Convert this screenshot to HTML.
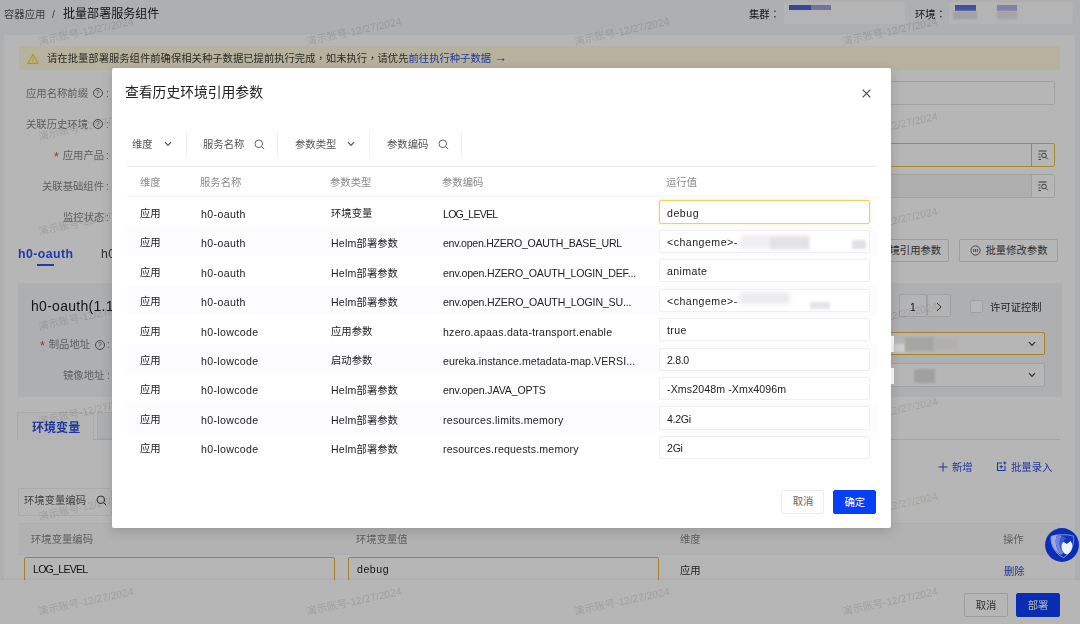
<!DOCTYPE html>
<html lang="zh-CN">
<head>
<meta charset="utf-8">
<title>批量部署服务组件</title>
<style>
*{box-sizing:border-box;margin:0;padding:0}
html,body{width:1080px;height:624px;overflow:hidden}
body{position:relative;background:#f4f5f7;font-family:"Liberation Sans","Noto Sans CJK SC",sans-serif;font-size:10.33px;color:#333}
.b{position:absolute}
#page{position:absolute;left:0;top:0;width:1080px;height:624px;overflow:hidden}
#mask{position:absolute;left:0;top:0;width:1080px;height:624px;background:rgba(0,0,0,.286)}
#modal{position:absolute;left:111.8px;top:67.7px;width:778.8px;height:460.1px;background:#fff;border-radius:2px;box-shadow:0 3px 12px rgba(0,0,0,.16);overflow:hidden}
.t{position:absolute;white-space:nowrap;line-height:16px;height:16px;will-change:transform}
.wm{position:absolute;white-space:nowrap;font-size:10.4px;line-height:12px;height:12px;width:110px;margin-left:-55px;margin-top:-6px;text-align:center;color:rgba(0,0,0,.13);transform:rotate(-12.3deg)}
.inp{position:absolute;border:1px solid #dfe2e6;border-radius:2px;background:#fff}
.btn{position:absolute;border:1px solid #d9dce1;border-radius:2px;background:#fff;text-align:center;line-height:21px;white-space:nowrap;color:#444}
.pri{background:#0640f4;border-color:#0640f4;color:#fff}
.lb{color:#868686}
.cm{font-family:"Liberation Sans","Noto Sans CJK TC",sans-serif}
.q{position:absolute;width:10px;height:10px;border:1px solid #666;border-radius:50%;font-size:7.5px;line-height:8px;text-align:center;color:#555}
.star{color:#e8424d;font-size:12.5px;line-height:10px;position:relative;top:1.5px;margin-right:1px}
.blur{position:absolute;filter:blur(2px)}
.hl{position:absolute;height:1px;background:#e8eaed}
.vl{position:absolute;width:1px;background:#f0f1f4}
</style>
</head>
<body>
<div id="page">
<div class="t" style="left:4px;top:6.8px;color:#555">容器应用</div>
<div class="t" style="left:52px;top:6.8px;color:#555">/</div>
<div class="t" style="left:63px;top:5.8px;font-size:12.05px;color:#222">批量部署服务组件</div>
<div class="t" style="left:749px;top:6.8px;color:#222">集群<span class="cm" lang="zh-TW">：</span></div>
<div class="t" style="left:915px;top:6.8px;color:#222">环境<span class="cm" lang="zh-TW">：</span></div>
<div class="b" style="left:784px;top:2px;width:121px;height:22px;background:#fcfcfd;border-radius:2px"></div>
<div class="b" style="left:949px;top:2px;width:124px;height:22px;background:#fcfcfd;border-radius:2px"></div>
<div class="blur" style="left:789px;top:5px;width:22px;height:5px;background:#4d63d8;filter:blur(.6px)"></div>
<div class="blur" style="left:811px;top:5px;width:20px;height:5px;background:#9aa3e6;filter:blur(.6px)"></div>
<div class="blur" style="left:955px;top:5px;width:21px;height:6px;background:#5a6fe0;filter:blur(.6px)"></div>
<div class="blur" style="left:997px;top:5px;width:20px;height:6px;background:#b3b6ee;filter:blur(.6px)"></div>
<div class="blur" style="left:953px;top:11px;width:24px;height:8px;background:#e3e3e6;filter:blur(1px)"></div>
<div class="blur" style="left:997px;top:11px;width:20px;height:8px;background:#e6e6ea;filter:blur(1px)"></div>
<div class="b" style="left:4px;top:35px;width:1071px;height:600px;background:#fff"></div>
<div class="t lb" style="right:992px;top:85.8px;">应用名称前缀</div>
<div class="q" style="left:92.5px;top:88.2px">?</div>
<div class="t lb" style="left:106px;top:85.8px;">:</div>
<div class="t lb" style="right:992px;top:116.8px;">关联历史环境</div>
<div class="q" style="left:92.5px;top:119.2px">?</div>
<div class="t lb" style="left:106px;top:116.8px;">:</div>
<div class="t lb" style="right:976px;top:147.8px;"><span class="star">*</span> 应用产品</div>
<div class="t lb" style="left:106px;top:147.8px;">:</div>
<div class="t lb" style="right:976px;top:178.8px;">关联基础组件</div>
<div class="t lb" style="left:106px;top:178.8px;">:</div>
<div class="t lb" style="right:976px;top:209.8px;">监控状态</div>
<div class="t lb" style="left:106px;top:209.8px;">:</div>
<div class="inp" style="left:113px;top:81px;width:942px;height:24px"></div>
<div class="inp" style="left:113px;top:143px;width:942px;height:24px;border-color:#f0c23a"></div>
<div class="b" style="left:1031px;top:143px;width:1px;height:24px;background:#f0c23a"></div>
<div class="inp" style="left:113px;top:174px;width:942px;height:24px;background:#f6f6f7"></div>
<div class="b" style="left:1032px;top:175px;width:22px;height:22px;background:#fff"></div>
<div class="b" style="left:1031px;top:174px;width:1px;height:24px;background:#dfe2e6"></div>
<svg class="b" style="left:1037px;top:149px" width="12" height="12" viewBox="0 0 12 12" fill="none" stroke="#555" stroke-width="1"><path d="M1.5 2H9.5M1.5 5H3.5M1.5 8H3.5M1.5 10.5H4"/><circle cx="7" cy="6.5" r="2.3"/><path d="M8.8 8.3L10.8 10.3"/></svg>
<svg class="b" style="left:1037px;top:180px" width="12" height="12" viewBox="0 0 12 12" fill="none" stroke="#555" stroke-width="1"><path d="M1.5 2H9.5M1.5 5H3.5M1.5 8H3.5M1.5 10.5H4"/><circle cx="7" cy="6.5" r="2.3"/><path d="M8.8 8.3L10.8 10.3"/></svg>
<div class="btn" style="left:830px;top:239px;width:119px;height:23px">查看历史环境引用参数</div>
<div class="btn" style="left:959px;top:239px;width:99px;height:23px;padding-left:16px">批量修改参数</div>
<svg class="b" style="left:970px;top:245px" width="11" height="11" viewBox="0 0 11 11" fill="none" stroke="#555" stroke-width="0.9"><circle cx="5.5" cy="5.5" r="4.6"/><path d="M3.7 4V7M5.5 4V7M7.3 4V7"/></svg>
<div class="t" style="left:17.5px;top:245.5px;color:#2e54e8;font-weight:bold"><span style="font-size:12.3px;letter-spacing:0.446px;position:relative;top:-0.5px">h0-oauth</span></div>
<div class="b" style="left:37px;top:264px;width:17px;height:2px;background:#2e54e8"></div>
<div class="t" style="left:101px;top:245.5px;color:#444"><span style="font-size:12.3px;letter-spacing:0.409px;position:relative;top:-0.5px">h0-lowcode</span></div>
<div class="b" style="left:18px;top:282.5px;width:1044px;height:114px;background:#f4f5f7"></div>
<div class="t" style="left:31px;top:298.1px;color:#222"><span style="font-size:14px;letter-spacing:0.284px;position:relative;top:-0.5px">h0-oauth(1.1.0)</span></div>
<div class="t lb" style="right:990px;top:337.40000000000003px;"><span class="star">*</span> 制品地址</div>
<div class="q" style="left:94.6px;top:339.8px">?</div>
<div class="t lb" style="left:107px;top:337.40000000000003px;">:</div>
<div class="t lb" style="right:975.4px;top:368.3px;">镜像地址</div>
<div class="t lb" style="left:106.5px;top:368.3px;">:</div>
<div class="inp" style="left:113px;top:332.2px;width:932px;height:23px;border-color:#f2b33c"></div>
<div class="inp" style="left:113px;top:363px;width:932px;height:23.6px"></div>
<svg class="b" style="left:1028px;top:341px" width="8" height="6" viewBox="0 0 8 6" fill="none" stroke="#444" stroke-width="1.2"><path d="M1 1.2L4 4.4L7 1.2"/></svg>
<svg class="b" style="left:1028px;top:372px" width="8" height="6" viewBox="0 0 8 6" fill="none" stroke="#444" stroke-width="1.2"><path d="M1 1.2L4 4.4L7 1.2"/></svg>
<div class="inp" style="left:899px;top:294px;width:28px;height:23px;background:#fdfdfd"></div>
<div class="inp" style="left:927px;top:294px;width:24px;height:23px;background:#fdfdfd"></div>
<div class="t" style="left:910px;top:299.8px;color:#222">1</div>
<svg class="b" style="left:936px;top:302px" width="6" height="10" viewBox="0 0 6 10" fill="none" stroke="#444" stroke-width="1"><path d="M1 1L5 5L1 9"/></svg>
<div class="inp" style="left:970px;top:300px;width:13px;height:13px"></div>
<div class="t" style="left:990px;top:299.8px;color:#333">许可证控制</div>
<div class="b" style="left:17px;top:412px;width:77px;height:28px;border:1px solid #eceef0;border-bottom:none;background:#fdfdfd"></div>
<div class="b" style="left:97px;top:412px;width:77px;height:27px;border:1px solid #e9ebee;background:#f4f5f7"></div>
<div class="hl" style="left:94px;top:439px;width:966px;background:#e3e5e8"></div>
<div class="t" style="left:32px;top:419.8px;font-size:12.05px;color:#2a4fe0;font-weight:bold">环境变量</div>
<svg class="b" style="left:938px;top:462px" width="10" height="10" viewBox="0 0 10 10" stroke="#2a4fe0" stroke-width="1"><path d="M5 0.5V9.5M0.5 5H9.5"/></svg>
<div class="t" style="left:952px;top:459.8px;color:#2a4fe0">新增</div>
<svg class="b" style="left:996px;top:461px" width="11" height="11" viewBox="0 0 11 11" fill="none" stroke="#2a4fe0" stroke-width="1.1"><path d="M6 2H1.5V9.5H9V5"/><path d="M3.5 5.8H7M5.2 4.2V7.4M8.8 0.5V3.5M7.3 2H10.3"/></svg>
<div class="t" style="left:1011px;top:459.8px;color:#2a4fe0">批量录入</div>
<div class="t" style="left:24px;top:493.1px;color:#5c5c5c">环境变量编码</div>
<svg class="b" style="left:96px;top:495px" width="11" height="11" viewBox="0 0 11 11" fill="none" stroke="#444" stroke-width="1"><circle cx="4.8" cy="4.8" r="3.8"/><path d="M7.6 7.6L10.2 10.2"/></svg>
<div class="b" style="left:18px;top:488px;width:94px;height:28px;border:1px solid #eef0f2;border-radius:2px"></div>
<div class="b" style="left:18px;top:523px;width:1042px;height:32px;background:#fafafb;border-top:1px solid #f3f4f6;border-bottom:1px solid #f3f4f6"></div>
<div class="t" style="left:31px;top:532.3px;color:#858585">环境变量编码</div>
<div class="t" style="left:356px;top:532.3px;color:#858585">环境变量值</div>
<div class="t" style="left:680px;top:532.3px;color:#858585">维度</div>
<div class="t" style="left:1003px;top:532.3px;color:#858585">操作</div>
<div class="inp" style="left:24px;top:557px;width:311px;height:24px;border-color:#f2b33c"></div>
<div class="inp" style="left:348px;top:557px;width:311px;height:24px;border-color:#f2b33c"></div>
<div class="t" style="left:32.5px;top:561.3px;color:#1a1a1a"><span style="font-size:10.6px;letter-spacing:-0.754px;position:relative;top:-0.5px">LOG_LEVEL</span></div>
<div class="t" style="left:356.5px;top:561.3px;color:#1a1a1a"><span style="font-size:10.6px;letter-spacing:0.545px;position:relative;top:-0.5px">debug</span></div>
<div class="t" style="left:680px;top:562.8px;color:#333">应用</div>
<div class="t" style="left:1004px;top:563.8px;color:#2a4fe0">删除</div>
<div class="b" style="left:0;top:580px;width:1080px;height:44px;background:#fff;box-shadow:0 -1px 4px rgba(0,0,0,.05)"></div>
<div class="btn" style="left:964px;top:593px;width:44px;height:24px;line-height:24.5px">取消</div>
<div class="btn pri" style="left:1016px;top:593px;width:44px;height:24px;line-height:24.5px;background:#0b3ffc;border-color:#0b3ffc">部署</div>
<div class="wm" style="left:85.5px;top:32px">演示账号-12/27/2024</div>
<div class="wm" style="left:353.5px;top:32px">演示账号-12/27/2024</div>
<div class="wm" style="left:621.5px;top:32px">演示账号-12/27/2024</div>
<div class="wm" style="left:889.5px;top:32px">演示账号-12/27/2024</div>
<div class="wm" style="left:85.5px;top:127px">演示账号-12/27/2024</div>
<div class="wm" style="left:353.5px;top:127px">演示账号-12/27/2024</div>
<div class="wm" style="left:621.5px;top:127px">演示账号-12/27/2024</div>
<div class="wm" style="left:889.5px;top:127px">演示账号-12/27/2024</div>
<div class="wm" style="left:85.5px;top:222px">演示账号-12/27/2024</div>
<div class="wm" style="left:353.5px;top:222px">演示账号-12/27/2024</div>
<div class="wm" style="left:621.5px;top:222px">演示账号-12/27/2024</div>
<div class="wm" style="left:889.5px;top:222px">演示账号-12/27/2024</div>
<div class="wm" style="left:85.5px;top:317px">演示账号-12/27/2024</div>
<div class="wm" style="left:353.5px;top:317px">演示账号-12/27/2024</div>
<div class="wm" style="left:621.5px;top:317px">演示账号-12/27/2024</div>
<div class="wm" style="left:889.5px;top:317px">演示账号-12/27/2024</div>
<div class="wm" style="left:85.5px;top:412px">演示账号-12/27/2024</div>
<div class="wm" style="left:353.5px;top:412px">演示账号-12/27/2024</div>
<div class="wm" style="left:621.5px;top:412px">演示账号-12/27/2024</div>
<div class="wm" style="left:889.5px;top:412px">演示账号-12/27/2024</div>
<div class="wm" style="left:85.5px;top:507px">演示账号-12/27/2024</div>
<div class="wm" style="left:353.5px;top:507px">演示账号-12/27/2024</div>
<div class="wm" style="left:621.5px;top:507px">演示账号-12/27/2024</div>
<div class="wm" style="left:889.5px;top:507px">演示账号-12/27/2024</div>
<div class="wm" style="left:85.5px;top:602px">演示账号-12/27/2024</div>
<div class="wm" style="left:353.5px;top:602px">演示账号-12/27/2024</div>
<div class="wm" style="left:621.5px;top:602px">演示账号-12/27/2024</div>
<div class="wm" style="left:889.5px;top:602px">演示账号-12/27/2024</div>
</div>
<div id="mask"></div>
<svg class="b" style="left:1044.2px;top:527.3px" width="36" height="36" viewBox="0 0 36 36" fill="none"><circle cx="18" cy="18" r="16.9" fill="#0a2eb6"/><path d="M7 9.6C12 7.2 24 7 29.6 9.2C30.6 18 27 26 19.6 30.6C11 27 6.4 18 7 9.6Z" fill="#1234b8" stroke="#93abf3" stroke-width=".8"/><path d="M7.2 9.8C9 8.8 11 8.2 13.2 8C10.4 13 11.4 22 17.4 28C11 25 6.8 18 7.2 9.8Z" fill="#a3a8e4"/><path d="M13.2 8C15 7.9 16.4 8.3 17.8 8.9C14.4 14 15.2 21 19.4 25.4L17.4 28C11.4 22 10.4 13 13.2 8Z" fill="#6f83dc"/><path d="M17.8 8.9C19.4 9.4 20.6 10.2 21.6 11.2C18.4 15 18 20 20.6 24L19.4 25.4C15.2 21 14.4 14 17.8 8.9Z" fill="#3f5ad0"/><path d="M17.8 17.4L19.4 14.8L22.8 17L26.6 14L28.2 17C28.8 22 26.6 26 22.8 27.4C19 26.4 16.8 22 17.8 17.4Z" fill="#eef1fb"/></svg>
<div class="b" style="left:889px;top:336px;width:4.5px;height:16px;background:#fff"></div>
<div class="blur" style="left:893.5px;top:343.5px;width:11px;height:8.5px;background:#cfcfcf;filter:blur(1px)"></div>
<div class="blur" style="left:905px;top:337px;width:29px;height:14px;background:#a6a6a2;filter:blur(1.2px)"></div>
<div class="blur" style="left:934px;top:338px;width:24px;height:12px;background:#b0afaa;filter:blur(2px)"></div>
<div class="b" style="left:889px;top:367.6px;width:4.5px;height:16px;background:#fff"></div>
<div class="blur" style="left:914px;top:368.5px;width:21px;height:14.3px;background:#a0a0a0;filter:blur(.8px)"></div>
<div class="b" style="left:19px;top:46px;width:1041px;height:23.5px;background:#b6b29d;border-radius:2px"></div>
<svg class="b" style="left:27px;top:53px" width="12" height="12" viewBox="0 0 12 12"><path d="M6 1.2 L11.2 10.4 H0.8 Z" fill="none" stroke="#b8960f" stroke-width="1.1" stroke-linejoin="round"/><path d="M6 4.6V7.4M6 8.3V9.2" stroke="#b8960f" stroke-width="1.1"/></svg>
<div class="t" style="left:47px;top:50.8px;color:#2a2a2a">请在批量部署服务组件前确保相关种子数据已提前执行完成<span class="cm" lang="zh-TW">，</span>如未执行<span class="cm" lang="zh-TW">，</span>请优先<span style="color:#1e38a0">前往执行种子数据 <span style="font-size:13px;line-height:10px">→</span></span></div>
<div id="modal">
<div class="t" style="left:13.2px;top:15.3px;font-size:13.8px;line-height:20px;height:20px;color:#222">查看历史环境引用参数</div>
<svg class="b" style="left:750.2px;top:21.3px" width="9" height="9" viewBox="0 0 9 9" stroke="#4a4a4a" stroke-width="1.2"><path d="M0.7 0.7L8.3 8.3M8.3 0.7L0.7 8.3"/></svg>
<div class="t" style="left:20.20px;top:68.90px;color:#555">维度</div>
<svg class="b" style="left:52.2px;top:73.3px" width="8" height="6" viewBox="0 0 8 6" fill="none" stroke="#555" stroke-width="1.2"><path d="M1 1.2L4 4.4L7 1.2"/></svg>
<div class="t" style="left:91.20px;top:68.90px;color:#555">服务名称</div>
<svg class="b" style="left:142.2px;top:71.3px" width="11" height="11" viewBox="0 0 11 11" fill="none" stroke="#666" stroke-width="1"><circle cx="4.8" cy="4.8" r="3.8"/><path d="M7.6 7.6L10.2 10.2"/></svg>
<div class="t" style="left:183.20px;top:68.90px;color:#555">参数类型</div>
<svg class="b" style="left:235.2px;top:73.3px" width="8" height="6" viewBox="0 0 8 6" fill="none" stroke="#555" stroke-width="1.2"><path d="M1 1.2L4 4.4L7 1.2"/></svg>
<div class="t" style="left:275.20px;top:68.90px;color:#555">参数编码</div>
<svg class="b" style="left:326.2px;top:71.3px" width="11" height="11" viewBox="0 0 11 11" fill="none" stroke="#666" stroke-width="1"><circle cx="4.8" cy="4.8" r="3.8"/><path d="M7.6 7.6L10.2 10.2"/></svg>
<div class="vl" style="left:74.2px;top:63.3px;height:27px"></div>
<div class="vl" style="left:165.2px;top:63.3px;height:27px"></div>
<div class="vl" style="left:257.2px;top:63.3px;height:27px"></div>
<div class="vl" style="left:349.2px;top:63.3px;height:27px"></div>
<div class="hl" style="left:15.200000000000003px;top:98.3px;width:750px"></div>
<div class="hl" style="left:15.200000000000003px;top:128.3px;width:750px;background:#f3f4f6"></div>
<div class="t" style="left:28.20px;top:106.90px;color:#8a8a8a">维度</div>
<div class="t" style="left:88.20px;top:106.90px;color:#8a8a8a">服务名称</div>
<div class="t" style="left:218.20px;top:106.90px;color:#8a8a8a">参数类型</div>
<div class="t" style="left:330.20px;top:106.90px;color:#8a8a8a">参数编码</div>
<div class="t" style="left:554.20px;top:106.90px;color:#8a8a8a">运行值</div>
<div class="t" style="left:28.20px;top:138.10px;color:#222">应用</div>
<div class="t" style="left:89.20px;top:138.10px;color:#222"><span style="font-size:10.6px;letter-spacing:0.369px;position:relative;top:-0.5px">h0-oauth</span></div>
<div class="t" style="left:219.20px;top:138.10px;color:#222">环境变量</div>
<div class="t" style="left:331.60px;top:138.10px;color:#222"><span style="font-size:10.6px;letter-spacing:-0.754px;position:relative;top:-0.5px">LOG_LEVEL</span></div>
<div class="inp" style="left:547.7px;top:132.70px;width:210.5px;height:23.2px;border-color:#f3cf55;box-shadow:0 0 3px rgba(243,207,85,.5)"></div>
<div class="t" style="left:555.60px;top:136.90px;color:#222"><span style="font-size:10.6px;letter-spacing:0.545px;position:relative;top:-0.5px">debug</span></div>
<div class="b" style="left:15.200000000000003px;top:159.04px;width:750px;height:29.44px;background:#fcfcfe"></div>
<div class="t" style="left:28.20px;top:167.54px;color:#222">应用</div>
<div class="t" style="left:89.20px;top:167.54px;color:#222"><span style="font-size:10.6px;letter-spacing:0.369px;position:relative;top:-0.5px">h0-oauth</span></div>
<div class="t" style="left:219.20px;top:167.54px;color:#222"><span style="font-size:10.6px;letter-spacing:0.216px;position:relative;top:-0.5px">Helm</span>部署参数</div>
<div class="t" style="left:331.60px;top:167.54px;color:#222"><span style="font-size:10.6px;letter-spacing:-0.281px;position:relative;top:-0.5px">env.open.HZERO_OAUTH_BASE_URL</span></div>
<div class="inp" style="left:547.7px;top:162.14px;width:210.5px;height:23.2px;border-color:#eeeff2"></div>
<div class="t" style="left:555.60px;top:166.34px;color:#222"><span style="font-size:10.6px;letter-spacing:0.490px;position:relative;top:-0.5px">&lt;changeme&gt;-</span></div>
<div class="t" style="left:28.20px;top:196.98px;color:#222">应用</div>
<div class="t" style="left:89.20px;top:196.98px;color:#222"><span style="font-size:10.6px;letter-spacing:0.369px;position:relative;top:-0.5px">h0-oauth</span></div>
<div class="t" style="left:219.20px;top:196.98px;color:#222"><span style="font-size:10.6px;letter-spacing:0.216px;position:relative;top:-0.5px">Helm</span>部署参数</div>
<div class="t" style="left:331.60px;top:196.98px;color:#222"><span style="font-size:10.6px;letter-spacing:-0.197px;position:relative;top:-0.5px">env.open.HZERO_OAUTH_LOGIN_DEF...</span></div>
<div class="inp" style="left:547.7px;top:191.58px;width:210.5px;height:23.2px;border-color:#eeeff2"></div>
<div class="t" style="left:555.60px;top:195.78px;color:#222"><span style="font-size:10.6px;letter-spacing:0.355px;position:relative;top:-0.5px">animate</span></div>
<div class="b" style="left:15.200000000000003px;top:217.92px;width:750px;height:29.44px;background:#fcfcfe"></div>
<div class="t" style="left:28.20px;top:226.42px;color:#222">应用</div>
<div class="t" style="left:89.20px;top:226.42px;color:#222"><span style="font-size:10.6px;letter-spacing:0.369px;position:relative;top:-0.5px">h0-oauth</span></div>
<div class="t" style="left:219.20px;top:226.42px;color:#222"><span style="font-size:10.6px;letter-spacing:0.216px;position:relative;top:-0.5px">Helm</span>部署参数</div>
<div class="t" style="left:331.60px;top:226.42px;color:#222"><span style="font-size:10.6px;letter-spacing:-0.185px;position:relative;top:-0.5px">env.open.HZERO_OAUTH_LOGIN_SU...</span></div>
<div class="inp" style="left:547.7px;top:221.02px;width:210.5px;height:23.2px;border-color:#eeeff2"></div>
<div class="t" style="left:555.60px;top:225.22px;color:#222"><span style="font-size:10.6px;letter-spacing:0.490px;position:relative;top:-0.5px">&lt;changeme&gt;-</span></div>
<div class="t" style="left:28.20px;top:255.86px;color:#222">应用</div>
<div class="t" style="left:89.20px;top:255.86px;color:#222"><span style="font-size:10.6px;letter-spacing:0.329px;position:relative;top:-0.5px">h0-lowcode</span></div>
<div class="t" style="left:219.20px;top:255.86px;color:#222">应用参数</div>
<div class="t" style="left:331.60px;top:255.86px;color:#222"><span style="font-size:10.6px;letter-spacing:0.222px;position:relative;top:-0.5px">hzero.apaas.data-transport.enable</span></div>
<div class="inp" style="left:547.7px;top:250.46px;width:210.5px;height:23.2px;border-color:#eeeff2"></div>
<div class="t" style="left:555.60px;top:254.66px;color:#222"><span style="font-size:10.6px;letter-spacing:0.384px;position:relative;top:-0.5px">true</span></div>
<div class="b" style="left:15.200000000000003px;top:276.80px;width:750px;height:29.44px;background:#fcfcfe"></div>
<div class="t" style="left:28.20px;top:285.30px;color:#222">应用</div>
<div class="t" style="left:89.20px;top:285.30px;color:#222"><span style="font-size:10.6px;letter-spacing:0.329px;position:relative;top:-0.5px">h0-lowcode</span></div>
<div class="t" style="left:219.20px;top:285.30px;color:#222">启动参数</div>
<div class="t" style="left:331.60px;top:285.30px;color:#222"><span style="font-size:10.6px;letter-spacing:0.072px;position:relative;top:-0.5px">eureka.instance.metadata-map.VERSI...</span></div>
<div class="inp" style="left:547.7px;top:279.90px;width:210.5px;height:23.2px;border-color:#eeeff2"></div>
<div class="t" style="left:555.60px;top:284.10px;color:#222"><span style="font-size:10.6px;letter-spacing:-0.355px;position:relative;top:-0.5px">2.8.0</span></div>
<div class="t" style="left:28.20px;top:314.74px;color:#222">应用</div>
<div class="t" style="left:89.20px;top:314.74px;color:#222"><span style="font-size:10.6px;letter-spacing:0.329px;position:relative;top:-0.5px">h0-lowcode</span></div>
<div class="t" style="left:219.20px;top:314.74px;color:#222"><span style="font-size:10.6px;letter-spacing:0.216px;position:relative;top:-0.5px">Helm</span>部署参数</div>
<div class="t" style="left:331.60px;top:314.74px;color:#222"><span style="font-size:10.6px;letter-spacing:-0.154px;position:relative;top:-0.5px">env.open.JAVA_OPTS</span></div>
<div class="inp" style="left:547.7px;top:309.34px;width:210.5px;height:23.2px;border-color:#eeeff2"></div>
<div class="t" style="left:555.60px;top:313.54px;color:#222"><span style="font-size:10.6px;letter-spacing:0.109px;position:relative;top:-0.5px">-Xms2048m -Xmx4096m</span></div>
<div class="b" style="left:15.200000000000003px;top:335.68px;width:750px;height:29.44px;background:#fcfcfe"></div>
<div class="t" style="left:28.20px;top:344.18px;color:#222">应用</div>
<div class="t" style="left:89.20px;top:344.18px;color:#222"><span style="font-size:10.6px;letter-spacing:0.329px;position:relative;top:-0.5px">h0-lowcode</span></div>
<div class="t" style="left:219.20px;top:344.18px;color:#222"><span style="font-size:10.6px;letter-spacing:0.216px;position:relative;top:-0.5px">Helm</span>部署参数</div>
<div class="t" style="left:331.60px;top:344.18px;color:#222"><span style="font-size:10.6px;letter-spacing:0.250px;position:relative;top:-0.5px">resources.limits.memory</span></div>
<div class="inp" style="left:547.7px;top:338.78px;width:210.5px;height:23.2px;border-color:#eeeff2"></div>
<div class="t" style="left:555.60px;top:342.98px;color:#222"><span style="font-size:10.6px;letter-spacing:-0.287px;position:relative;top:-0.5px">4.2Gi</span></div>
<div class="t" style="left:28.20px;top:373.62px;color:#222">应用</div>
<div class="t" style="left:89.20px;top:373.62px;color:#222"><span style="font-size:10.6px;letter-spacing:0.329px;position:relative;top:-0.5px">h0-lowcode</span></div>
<div class="t" style="left:219.20px;top:373.62px;color:#222"><span style="font-size:10.6px;letter-spacing:0.216px;position:relative;top:-0.5px">Helm</span>部署参数</div>
<div class="t" style="left:331.60px;top:373.62px;color:#222"><span style="font-size:10.6px;letter-spacing:0.173px;position:relative;top:-0.5px">resources.requests.memory</span></div>
<div class="inp" style="left:547.7px;top:368.22px;width:210.5px;height:23.2px;border-color:#eeeff2"></div>
<div class="t" style="left:555.60px;top:372.42px;color:#222"><span style="font-size:10.6px;letter-spacing:-0.265px;position:relative;top:-0.5px">2Gi</span></div>
<div class="blur" style="left:629.2px;top:167.3px;width:68px;height:14px;background:#efeff1"></div>
<div class="blur" style="left:658.2px;top:169.3px;width:39px;height:12px;background:#e3e3e5;filter:blur(1.5px)"></div>
<div class="blur" style="left:740.2px;top:172.3px;width:14px;height:9px;background:#e2e2e4;filter:blur(1px)"></div>
<div class="blur" style="left:628.2px;top:224.3px;width:50px;height:12px;background:#ececee"></div>
<div class="blur" style="left:698.2px;top:234.3px;width:20px;height:7px;background:#e6e6e8;filter:blur(1px)"></div>
<div class="btn" style="left:669.7px;top:422.5px;width:43px;height:23.6px;line-height:22.6px;border-color:#ebecef;color:#666">取消</div>
<div class="btn pri" style="left:721.4px;top:422.3px;width:43.2px;height:24px;line-height:23px">确定</div>
</div>
</body>
</html>
